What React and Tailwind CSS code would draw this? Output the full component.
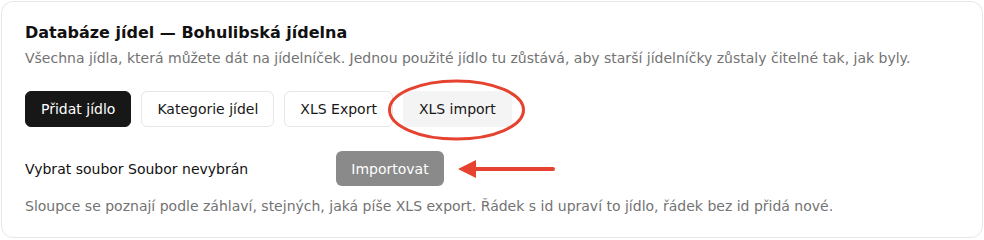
import React from 'react';

const BUTTONS = [
  { label: 'Přidat jídlo', kind: 'primary' },
  { label: 'Kategorie jídel', kind: 'outline' },
  { label: 'XLS Export', kind: 'outline' },
  { label: 'XLS import', kind: 'active' },
];

const KIND = {
  primary: 'border-[#171717] bg-[#171717] text-white',
  outline: 'border-[#e6e6e6] bg-white text-[#171717]',
  active: 'border-[#f4f4f4] bg-[#f4f4f4] text-[#171717]',
};

export default function App() {
  return (
    <div className="bg-white p-px" style={{ fontFamily: '"DejaVu Sans", Verdana, sans-serif' }}>
      <div className="relative rounded-xl border border-[#e6e6e6] bg-white px-[23px] pb-[21px] pt-[19px]">
        {/* header */}
        <h1 className="text-base font-bold leading-6 text-[#111]">Databáze jídel — Bohulibská jídelna</h1>
        <p className="mt-[3px] text-sm leading-5 text-[#737373]">
          Všechna jídla, která můžete dát na jídelníček. Jednou použité jídlo tu zůstává, aby starší jídelníčky zůstaly čitelné tak, jak byly.
        </p>

        {/* actions */}
        <div className="mt-[23px] flex gap-2.5">
          {BUTTONS.map((b) => (
            <button
              key={b.label}
              className={`h-9 rounded-md border px-[15px] text-sm leading-5 ${KIND[b.kind]}`}
            >
              {b.label}
            </button>
          ))}
        </div>

        {/* import row */}
        <div className="mt-6 flex items-center gap-3">
          <span className="w-[299px] text-sm leading-5 text-[#111]">Vybrat soubor Soubor nevybrán</span>
          <button className="h-[35px] w-[108px] rounded-md bg-[#8a8a8a] text-sm leading-5 text-white">Importovat</button>
        </div>

        <p className="mt-2.5 text-sm leading-5 text-[#737373]">
          Sloupce se poznají podle záhlaví, stejných, jaká píše XLS export. Řádek s id upraví to jídlo, řádek bez id přidá nové.
        </p>

        {/* annotation overlay */}
        <svg
          className="pointer-events-none absolute left-[-2px] top-[-2px]"
          width="984"
          height="240"
          viewBox="0 0 984 240"
        >
          <ellipse cx="456.5" cy="110" rx="67" ry="29" fill="none" stroke="#e5432f" strokeWidth="3" />
          <line x1="472" y1="169" x2="553" y2="169" stroke="#e5432f" strokeWidth="4" strokeLinecap="round" />
          <polygon points="458,169 476,160 476,178" fill="#e5432f" />
        </svg>
      </div>
    </div>
  );
}
